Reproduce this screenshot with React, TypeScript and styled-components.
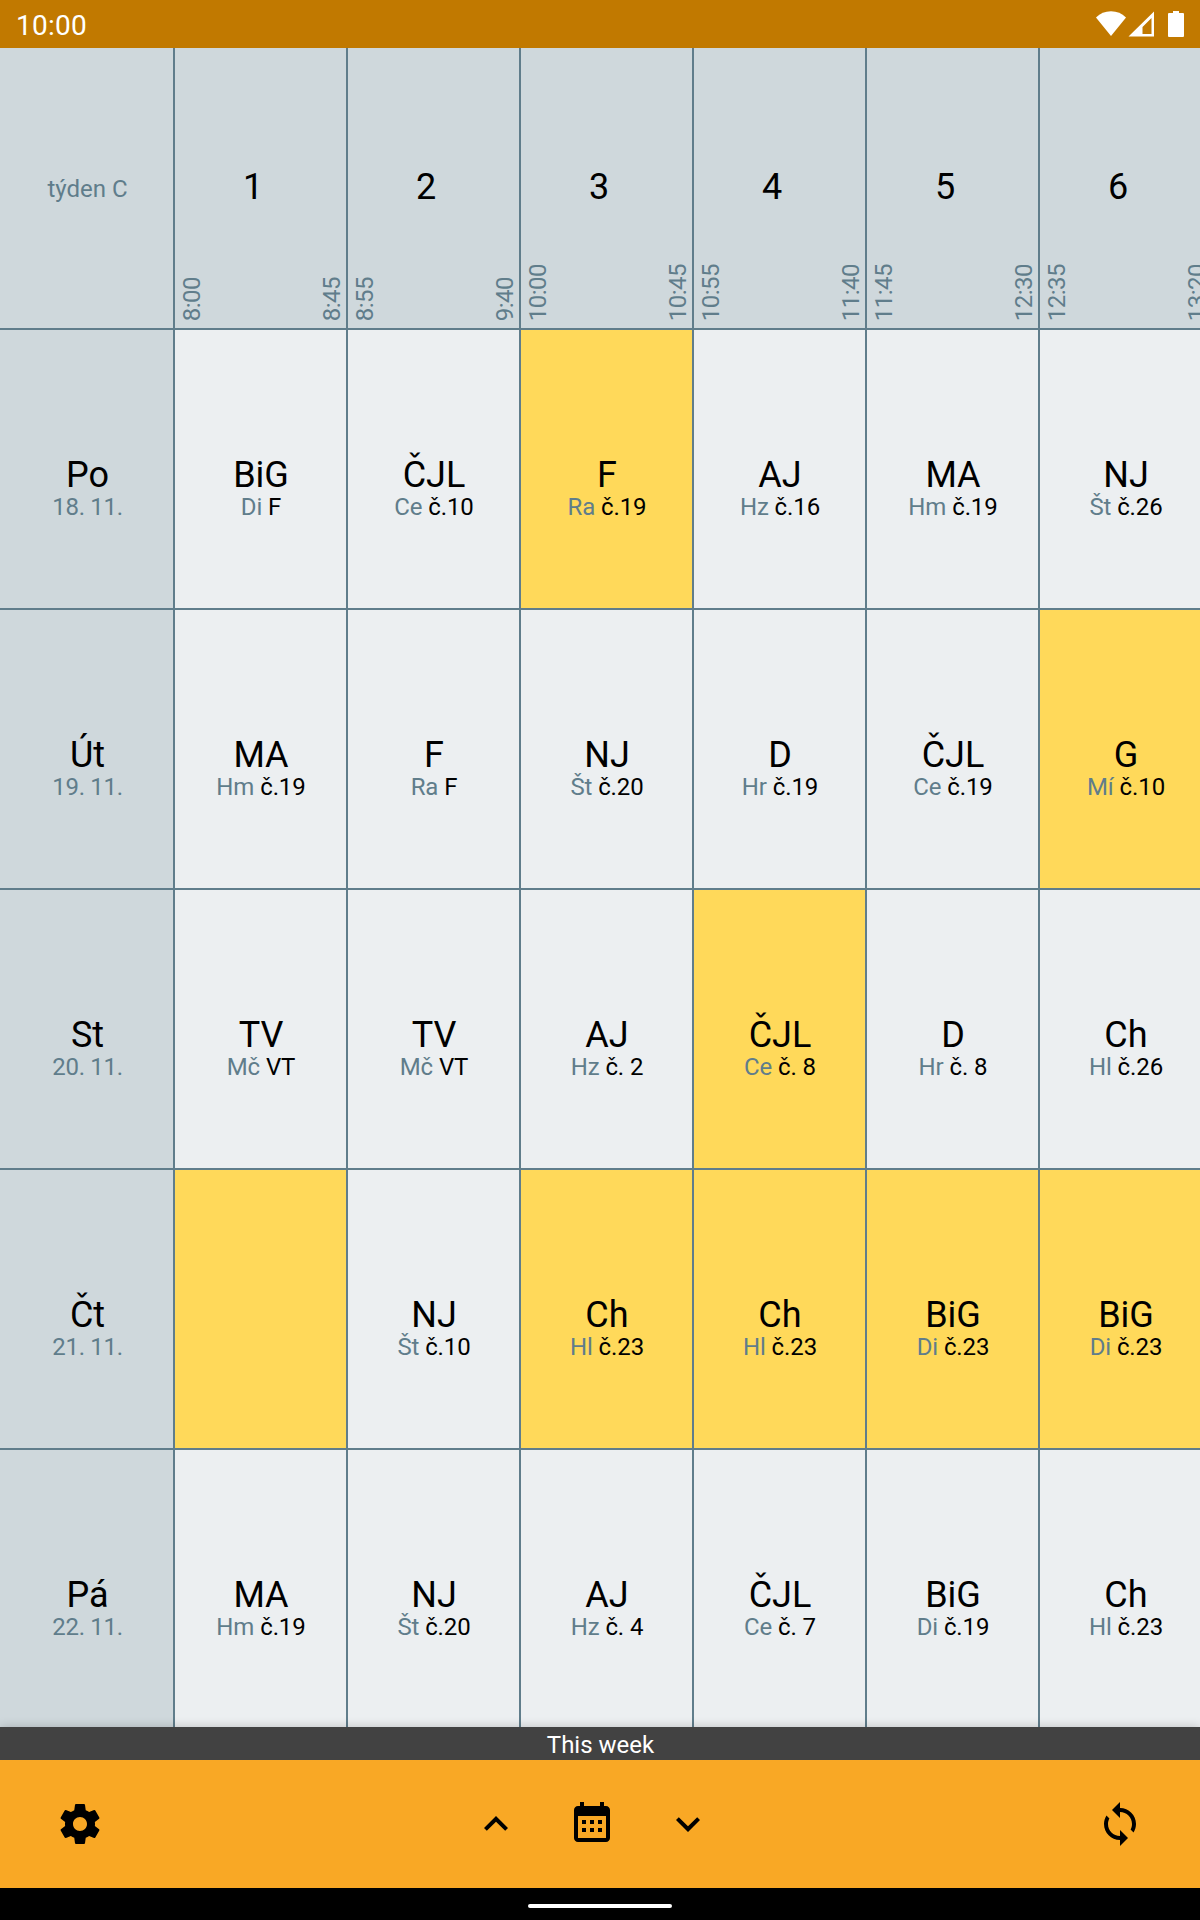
import React from 'react';
import styled, { createGlobalStyle } from 'styled-components';

const GlobalStyle = createGlobalStyle`
  * { box-sizing: border-box; }
  html, body { margin: 0; padding: 0; }
  body { font-family: Roboto, 'Noto Sans', sans-serif; color: #000; }
`;

const LINE = '#607d8b';

const Screen = styled.div`
  width: 1200px;
  height: 1920px;
  display: flex;
  flex-direction: column;
  overflow: hidden;
  background: #000;
`;

const StatusBar = styled.header`
  height: 48px;
  flex: none;
  display: flex;
  align-items: center;
  justify-content: space-between;
  padding: 4px 16px 0;
  background: #c17900;
  color: #fff;
  font-size: 28px;
  line-height: 34px;
  letter-spacing: 0.25px;
`;

const StatusIcons = styled.svg`
  display: block;
  width: 90px;
  height: 28px;
  margin-top: -4px;
  fill: #fff;
`;

const Timetable = styled.main`
  height: 1679px;
  flex: none;
  overflow: hidden;
`;

const Row = styled.div`
  display: grid;
  grid-template-columns: 173px repeat(6, 173px);
  width: 1211px;
  height: 280px;
  border-top: 2px solid ${LINE};
`;

const HeaderRow = styled(Row)`
  border-top: none;
  background: #cfd8dc;
`;

const Corner = styled.div`
  display: flex;
  align-items: center;
  justify-content: center;
  padding: 2px 0 0 2px;
  color: ${LINE};
  font-size: 24px;
  line-height: 28px;
`;

const HourCell = styled.div`
  display: flex;
  justify-content: space-between;
  align-items: flex-end;
  padding: 0 0 7px 3px;
  border-left: 2px solid ${LINE};
`;

const HourTime = styled.span`
  writing-mode: vertical-rl;
  transform: rotate(180deg);
  color: ${LINE};
  font-size: 24px;
  line-height: 28px;
  letter-spacing: -0.5px;
  white-space: nowrap;
`;

const HourNumber = styled.span`
  align-self: center;
  margin: 4px 18px 0 0;
  font-size: 36px;
  line-height: 42px;
`;

const DayCell = styled.div`
  padding: 127px 0 0 2px;
  text-align: center;
  background: #cfd8dc;
`;

const LessonCell = styled.div<{ $changed?: boolean }>`
  padding: 127px 0 0 1px;
  text-align: center;
  border-left: 2px solid ${LINE};
  background: ${(p) => (p.$changed ? '#ffd95a' : '#eceff1')};
`;

const Title = styled.div`
  font-size: 36px;
  line-height: 36px;
`;

const Detail = styled.div<{ $date?: boolean }>`
  font-size: 24px;
  line-height: 28px;
  letter-spacing: ${(p) => (p.$date ? '-0.3px' : '-0.1px')};
`;

const Muted = styled.span`
  color: ${LINE};
`;

const WeekLabel = styled.div`
  position: relative;
  height: 33px;
  flex: none;
  padding-left: 1px;
  background: #424242;
  color: #fff;
  font-size: 24px;
  line-height: 36px;
  text-align: center;
  box-shadow: 0 0 10px rgba(0, 0, 0, 0.2);
`;

const BottomBar = styled.nav`
  position: relative;
  height: 128px;
  flex: none;
  display: grid;
  grid-template-columns: 1fr auto 1fr;
  align-items: center;
  padding: 0 56px;
  background: #f9a825;
`;

const WeekControls = styled.div`
  display: flex;
  gap: 48px;
  margin-right: 16px;
`;

const IconButton = styled.button<{ $end?: boolean }>`
  width: 48px;
  height: 48px;
  padding: 0;
  border: 0;
  background: none;
  justify-self: ${(p) => (p.$end ? 'end' : 'start')};
`;

const Glyph = styled.svg`
  display: block;
  width: 48px;
  height: 48px;
`;

const GestureArea = styled.footer`
  height: 32px;
  display: flex;
  justify-content: center;
  padding-top: 16px;
`;

const GestureHandle = styled.div`
  width: 144px;
  height: 4px;
  border-radius: 2px;
  background: #fff;
`;

const icons = {
  settings:
    'M19.43 12.98c.04-.32.07-.64.07-.98s-.03-.66-.07-.98l2.11-1.65c.19-.15.24-.42.12-.64l-2-3.46c-.12-.22-.39-.3-.61-.22l-2.49 1c-.52-.4-1.08-.73-1.69-.98l-.38-2.65C14.46 2.18 14.25 2 14 2h-4c-.25 0-.46.18-.49.42l-.38 2.65c-.61.25-1.17.59-1.69.98l-2.49-1c-.23-.09-.49 0-.61.22l-2 3.46c-.13.22-.07.49.12.64l2.11 1.65c-.04.32-.07.65-.07.98s.03.66.07.98l-2.11 1.65c-.19.15-.24.42-.12.64l2 3.46c.12.22.39.3.61.22l2.49-1c.52.4 1.08.73 1.69.98l.38 2.65c.03.24.24.42.49.42h4c.25 0 .46-.18.49-.42l.38-2.65c.61-.25 1.17-.59 1.69-.98l2.49 1c.23.09.49 0 .61-.22l2-3.46c.12-.22.07-.49-.12-.64l-2.11-1.65zM12 15.5c-1.93 0-3.5-1.57-3.5-3.5s1.57-3.5 3.5-3.5 3.5 1.57 3.5 3.5-1.57 3.5-3.5 3.5z',
  up: 'M12 8l-6 6 1.41 1.41L12 10.83l4.59 4.58L18 14z',
  down: 'M16.59 8.59L12 13.17 7.41 8.59 6 10l6 6 6-6z',
  calendar:
    'M7 10h2v2H7zm0 4h2v2H7zm4-4h2v2h-2zm0 4h2v2h-2zm4-4h2v2h-2zm0 4h2v2h-2zM5 21c-1.110 0-2-.9-2-2V5c0-1.100.89-2 2-2h1V1h2v2h8V1h2v2h1c1.100 0 2 .9 2 2v14c0 1.100-.9 2-2 2zM5 8v11h14V8z',
  sync: 'M12 4V1L8 5l4 4V6c3.31 0 6 2.69 6 6 0 1.01-.25 1.97-.7 2.8l1.46 1.46C19.54 15.03 20 13.57 20 12c0-4.42-3.58-8-8-8zm0 14c-3.31 0-6-2.69-6-6 0-1.01.25-1.97.7-2.8L5.24 7.74C4.46 8.97 4 10.43 4 12c0 4.42 3.58 8 8 8v3l4-4-4-4v3z',
};

function Icon({ name }: { name: keyof typeof icons }) {
  return (
    <Glyph viewBox="0 0 24 24">
      <path fillRule="evenodd" d={icons[name]} />
    </Glyph>
  );
}

const hours = [
  ['8:00', '8:45'],
  ['8:55', '9:40'],
  ['10:00', '10:45'],
  ['10:55', '11:40'],
  ['11:45', '12:30'],
  ['12:35', '13:20'],
];

type Lesson = { subject?: string; teacher?: string; room?: string; changed?: boolean };

const L = (subject: string, teacher: string, room: string, changed = false): Lesson => ({
  subject,
  teacher,
  room,
  changed,
});

const days: { name: string; date: string; lessons: Lesson[] }[] = [
  {
    name: 'Po',
    date: '18. 11.',
    lessons: [
      L('BiG', 'Di', 'F'),
      L('ČJL', 'Ce', 'č.10'),
      L('F', 'Ra', 'č.19', true),
      L('AJ', 'Hz', 'č.16'),
      L('MA', 'Hm', 'č.19'),
      L('NJ', 'Št', 'č.26'),
    ],
  },
  {
    name: 'Út',
    date: '19. 11.',
    lessons: [
      L('MA', 'Hm', 'č.19'),
      L('F', 'Ra', 'F'),
      L('NJ', 'Št', 'č.20'),
      L('D', 'Hr', 'č.19'),
      L('ČJL', 'Ce', 'č.19'),
      L('G', 'Mí', 'č.10', true),
    ],
  },
  {
    name: 'St',
    date: '20. 11.',
    lessons: [
      L('TV', 'Mč', 'VT'),
      L('TV', 'Mč', 'VT'),
      L('AJ', 'Hz', 'č. 2'),
      L('ČJL', 'Ce', 'č. 8', true),
      L('D', 'Hr', 'č. 8'),
      L('Ch', 'Hl', 'č.26'),
    ],
  },
  {
    name: 'Čt',
    date: '21. 11.',
    lessons: [
      { changed: true },
      L('NJ', 'Št', 'č.10'),
      L('Ch', 'Hl', 'č.23', true),
      L('Ch', 'Hl', 'č.23', true),
      L('BiG', 'Di', 'č.23', true),
      L('BiG', 'Di', 'č.23', true),
    ],
  },
  {
    name: 'Pá',
    date: '22. 11.',
    lessons: [
      L('MA', 'Hm', 'č.19'),
      L('NJ', 'Št', 'č.20'),
      L('AJ', 'Hz', 'č. 4'),
      L('ČJL', 'Ce', 'č. 7'),
      L('BiG', 'Di', 'č.19'),
      L('Ch', 'Hl', 'č.23'),
    ],
  },
];

export default function App() {
  return (
    <Screen>
      <GlobalStyle />
      <StatusBar>
        <span>10:00</span>
        <StatusIcons viewBox="0 0 90 28">
          <path d="M2 7.5C6.2 3.3 11 1.2 17 1.2S27.8 3.3 32 7.5L17 26z" />
          <path fillRule="evenodd" d="M34.500 26.500L60 1.500V26.500zM48.500 24H57.500V8L48.500 17z" />
          <path d="M79 1h6v2h4q1 0 1 1v22q0 1-1 1h-14q-1 0-1-1v-22q0-1 1-1H79z" />
        </StatusIcons>
      </StatusBar>

      <Timetable>
        <HeaderRow>
          <Corner>týden C</Corner>
          {hours.map(([from, to], i) => (
            <HourCell key={from}>
              <HourTime>{from}</HourTime>
              <HourNumber>{i + 1}</HourNumber>
              <HourTime>{to}</HourTime>
            </HourCell>
          ))}
        </HeaderRow>
        {days.map((day) => (
          <Row key={day.name}>
            <DayCell>
              <Title>{day.name}</Title>
              <Detail $date>
                <Muted>{day.date}</Muted>
              </Detail>
            </DayCell>
            {day.lessons.map((lesson, i) => (
              <LessonCell key={i} $changed={lesson.changed}>
                {lesson.subject && (
                  <>
                    <Title>{lesson.subject}</Title>
                    <Detail>
                      <Muted>{lesson.teacher}</Muted> {lesson.room}
                    </Detail>
                  </>
                )}
              </LessonCell>
            ))}
          </Row>
        ))}
      </Timetable>

      <WeekLabel>This week</WeekLabel>
      <BottomBar>
        <IconButton aria-label="Settings">
          <Icon name="settings" />
        </IconButton>
        <WeekControls>
          <IconButton aria-label="Previous week">
            <Icon name="up" />
          </IconButton>
          <IconButton aria-label="Current week">
            <Icon name="calendar" />
          </IconButton>
          <IconButton aria-label="Next week">
            <Icon name="down" />
          </IconButton>
        </WeekControls>
        <IconButton aria-label="Synchronize" $end>
          <Icon name="sync" />
        </IconButton>
      </BottomBar>
      <GestureArea>
        <GestureHandle />
      </GestureArea>
    </Screen>
  );
}
